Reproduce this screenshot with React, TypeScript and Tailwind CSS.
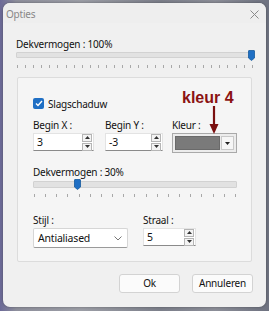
import React from "react";

const FONT = { fontFamily: '"Noto Sans", "Open Sans", sans-serif' };

function Thumb() {
  return (
    <svg width="7" height="11" viewBox="0 0 7 11">
      <path d="M1 0.5 H6 Q6.5 0.5 6.5 1 V8 L3.5 10.5 L0.5 8 V1 Q0.5 0.5 1 0.5 Z" fill="#1f6fc4" stroke="#155a9e" strokeWidth="0.8" />
    </svg>
  );
}

function Slider({ pct, ticks, h }: { pct: number; ticks: number; h: string }) {
  return (
    <div className="flex flex-col">
      <div className={`relative ${h} bg-[#e2e2e2] border border-[#d2d2d2] rounded-[1px]`}>
        <div className="absolute top-[-3px]" style={{ left: `calc(${pct}% - 5px)` }}>
          <Thumb />
        </div>
      </div>
      <div className="flex justify-between mt-[6px] px-[1px]">
        {Array.from({ length: ticks }).map((_, i) => (
          <div key={i} className="w-[1px] h-[3px] bg-[#a8a8a8]" />
        ))}
      </div>
    </div>
  );
}

function Spin() {
  return (
    <div className="flex flex-col gap-[1px] w-[10px] mr-[1px]">
      <div className="h-[8px] border border-[#b5b5b5] bg-[#f4f4f4] flex items-center justify-center">
        <svg width="5" height="3" viewBox="0 0 5 3"><path d="M0 3 L2.5 0 L5 3 Z" fill="#333" /></svg>
      </div>
      <div className="h-[8px] border border-[#b5b5b5] bg-[#f4f4f4] flex items-center justify-center">
        <svg width="5" height="3" viewBox="0 0 5 3"><path d="M0 0 L2.5 3 L5 0 Z" fill="#333" /></svg>
      </div>
    </div>
  );
}

function SpinInput({ value, w }: { value: string; w: string }) {
  return (
    <div className={`${w} h-[18px] bg-white border border-[#e3e3e3] border-b-[#8a8a8a] flex items-center justify-between pl-[3px]`}>
      <span className="text-[10.5px] leading-none">{value}</span>
      <Spin />
    </div>
  );
}

export default function App() {
  return (
    <div
      className="w-[269px] h-[311px] overflow-hidden pt-[3px] pl-[3px] bg-[linear-gradient(90deg,#6c6a98_0%,#8e8f9c_6%,#9c9ea6_30%,#7c7f8a_60%,#8c8e98_80%,#6e7280_100%)]"
      style={FONT}
    >
      <div className="w-[263px] h-[304px] bg-[#f0f0f0] rounded-[7px] flex flex-col shadow-[0_0_3px_rgba(0,0,0,0.35)] overflow-hidden">
        <div className="h-[20px] flex items-center justify-between pl-[3px] pr-[7px] bg-[#eeeeee]">
          <span className="text-[10px] tracking-[-0.2px] leading-none text-[#888888] mt-[1px]">Opties</span>
          <svg width="9" height="9" viewBox="0 0 9 9" className="mt-[2px]">
            <path d="M0.5 0.5 L8.5 8.5 M8.5 0.5 L0.5 8.5" stroke="#8a8a8a" strokeWidth="1" />
          </svg>
        </div>
        <div className="flex flex-col px-[12px] pt-[13px] text-[10px] tracking-[-0.2px] text-[#111111]">
          <div className="leading-[16px] pl-[1px]">Dekvermogen : 100%</div>
          <div className="ml-[1px]">
            <div className="flex flex-col">
              <div className="relative h-[6px] bg-[#e2e2e2] border border-[#d2d2d2] rounded-[1px]">
                <div className="absolute top-[-3px] right-[-2px]">
                  <Thumb />
                </div>
              </div>
              <div className="flex justify-between mt-[7px] px-[1px]">
                {Array.from({ length: 30 }).map((_, i) => (
                  <div key={i} className="w-[1px] h-[3px] bg-[#a8a8a8]" />
                ))}
              </div>
            </div>
          </div>
          <div className="relative mt-[9px] mx-[2px] h-[185px] border border-[#dcdcdc] bg-[#f5f5f5] rounded-[2px] flex flex-col pl-[15px] pr-[12px]">
            <div className="flex items-center gap-[4px] mt-[20px] h-[11px]">
              <div className="w-[11px] h-[11px] rounded-[2px] bg-[#1f6fc4] flex items-center justify-center">
                <svg width="8" height="7" viewBox="0 0 8 7"><path d="M1 3.5 L3 5.5 L7 1" stroke="white" strokeWidth="1.4" fill="none" /></svg>
              </div>
              <span className="leading-none">Slagschaduw</span>
            </div>
            <div className="flex mt-[8px]">
              <div className="flex flex-col w-[72px]">
                <span className="leading-[16px]">Begin X :</span>
                <SpinInput value="3" w="w-[61px]" />
              </div>
              <div className="flex flex-col w-[67px]">
                <span className="leading-[16px]">Begin Y :</span>
                <SpinInput value="-3" w="w-[58px]" />
              </div>
              <div className="flex flex-col">
                <span className="leading-[16px]">Kleur :</span>
                <div className="w-[65px] h-[20px] border border-[#a9a9a9] bg-[#ececec] flex items-center p-[2px] gap-[1px]">
                  <div className="flex-1 h-full bg-[#7a7a7a] border border-[#6a6a6a]" />
                  <div className="w-[13px] h-full bg-[#f6f6f6] border border-[#c9c9c9] flex items-center justify-center">
                    <svg width="5" height="3" viewBox="0 0 5 3"><path d="M0 0 L2.5 3 L5 0 Z" fill="#222" /></svg>
                  </div>
                </div>
              </div>
            </div>
            <div className="leading-[16px] mt-[11px]">Dekvermogen : 30%</div>
            <div className="mt-[1px] w-[204px]">
              <Slider pct={22.5} ticks={19} h="h-[7px]" />
            </div>
            <div className="flex mt-[15px]">
              <div className="flex flex-col w-[110px]">
                <span className="leading-[16px]">Stijl :</span>
                <div className="w-[95px] h-[20px] bg-white border border-[#d6d6d6] border-b-[#9a9a9a] rounded-[2px] flex items-center justify-between pl-[4px] pr-[5px]">
                  <span className="text-[10.5px] leading-none">Antialiased</span>
                  <svg width="8" height="5" viewBox="0 0 8 5"><path d="M0.5 0.5 L4 4 L7.5 0.5" stroke="#777" strokeWidth="1" fill="none" /></svg>
                </div>
              </div>
              <div className="flex flex-col">
                <span className="leading-[16px]">Straal :</span>
                <SpinInput value="5" w="w-[53px]" />
              </div>
            </div>

            <div className="absolute left-[164px] top-[10px] text-[16px] tracking-normal font-bold leading-[20px] text-[#8b1212] whitespace-nowrap" style={{ fontFamily: '"Liberation Sans", Arial, sans-serif' }}>
              kleur 4
            </div>
            <svg className="absolute left-[191px] top-[28px]" width="10" height="29" viewBox="0 0 10 29">
              <path d="M5 0 V20" stroke="#7a0f0f" strokeWidth="2.2" />
              <path d="M0.5 18 L9.5 18 L5 28 Z" fill="#7a0f0f" />
            </svg>
          </div>
          <div className="flex justify-end gap-[12px] mt-[12px] mr-[1px]">
            <div className="w-[61px] h-[19px] bg-[#fbfbfb] border border-[#d3d3d3] rounded-[3px] flex items-center justify-center">Ok</div>
            <div className="w-[61px] h-[19px] bg-[#fbfbfb] border border-[#d3d3d3] rounded-[3px] flex items-center justify-center">Annuleren</div>
          </div>
        </div>
      </div>
    </div>
  );
}
